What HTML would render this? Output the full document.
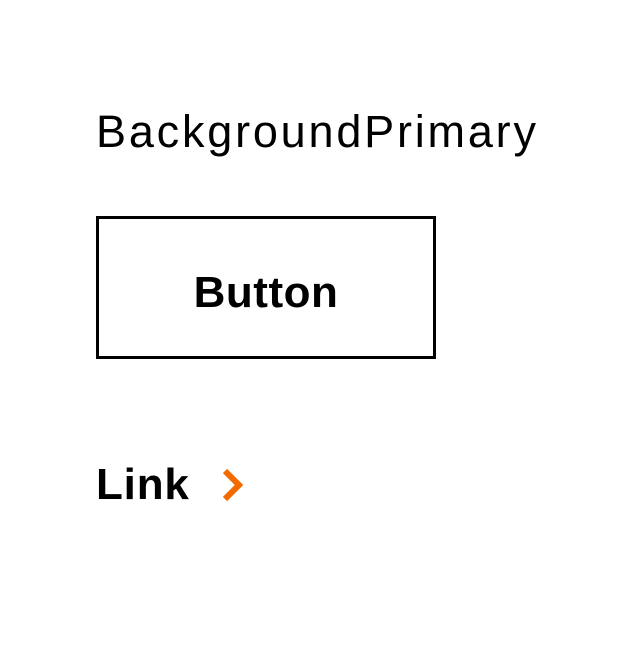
<!DOCTYPE html>
<html><head><style>
body{margin:0;width:637px;height:648px;background:#fff;font-family:"Liberation Sans",sans-serif;position:relative;overflow:hidden}
.t{position:absolute;left:96px;top:104px;font-size:45px;letter-spacing:2.8px;color:#000;line-height:56px}
.b{position:absolute;left:96px;top:216px;width:334px;height:137px;border:3px solid #000;display:flex;align-items:center;justify-content:center;font-weight:bold;font-size:44px;letter-spacing:0.5px}
.b span{position:relative;top:5px}
.l{position:absolute;left:96px;top:457px;font-weight:bold;font-size:44px;line-height:56px;letter-spacing:0.8px}
svg{position:absolute;left:220px;top:468px}
</style></head><body>
<div class="t">BackgroundPrimary</div>
<div class="b"><span>Button</span></div>
<div class="l">Link</div>
<svg width="26" height="34" viewBox="0 0 26 34"><path d="M5 3 L19 17 L5 31" fill="none" stroke="#f26a00" stroke-width="6"/></svg>
</body></html>
